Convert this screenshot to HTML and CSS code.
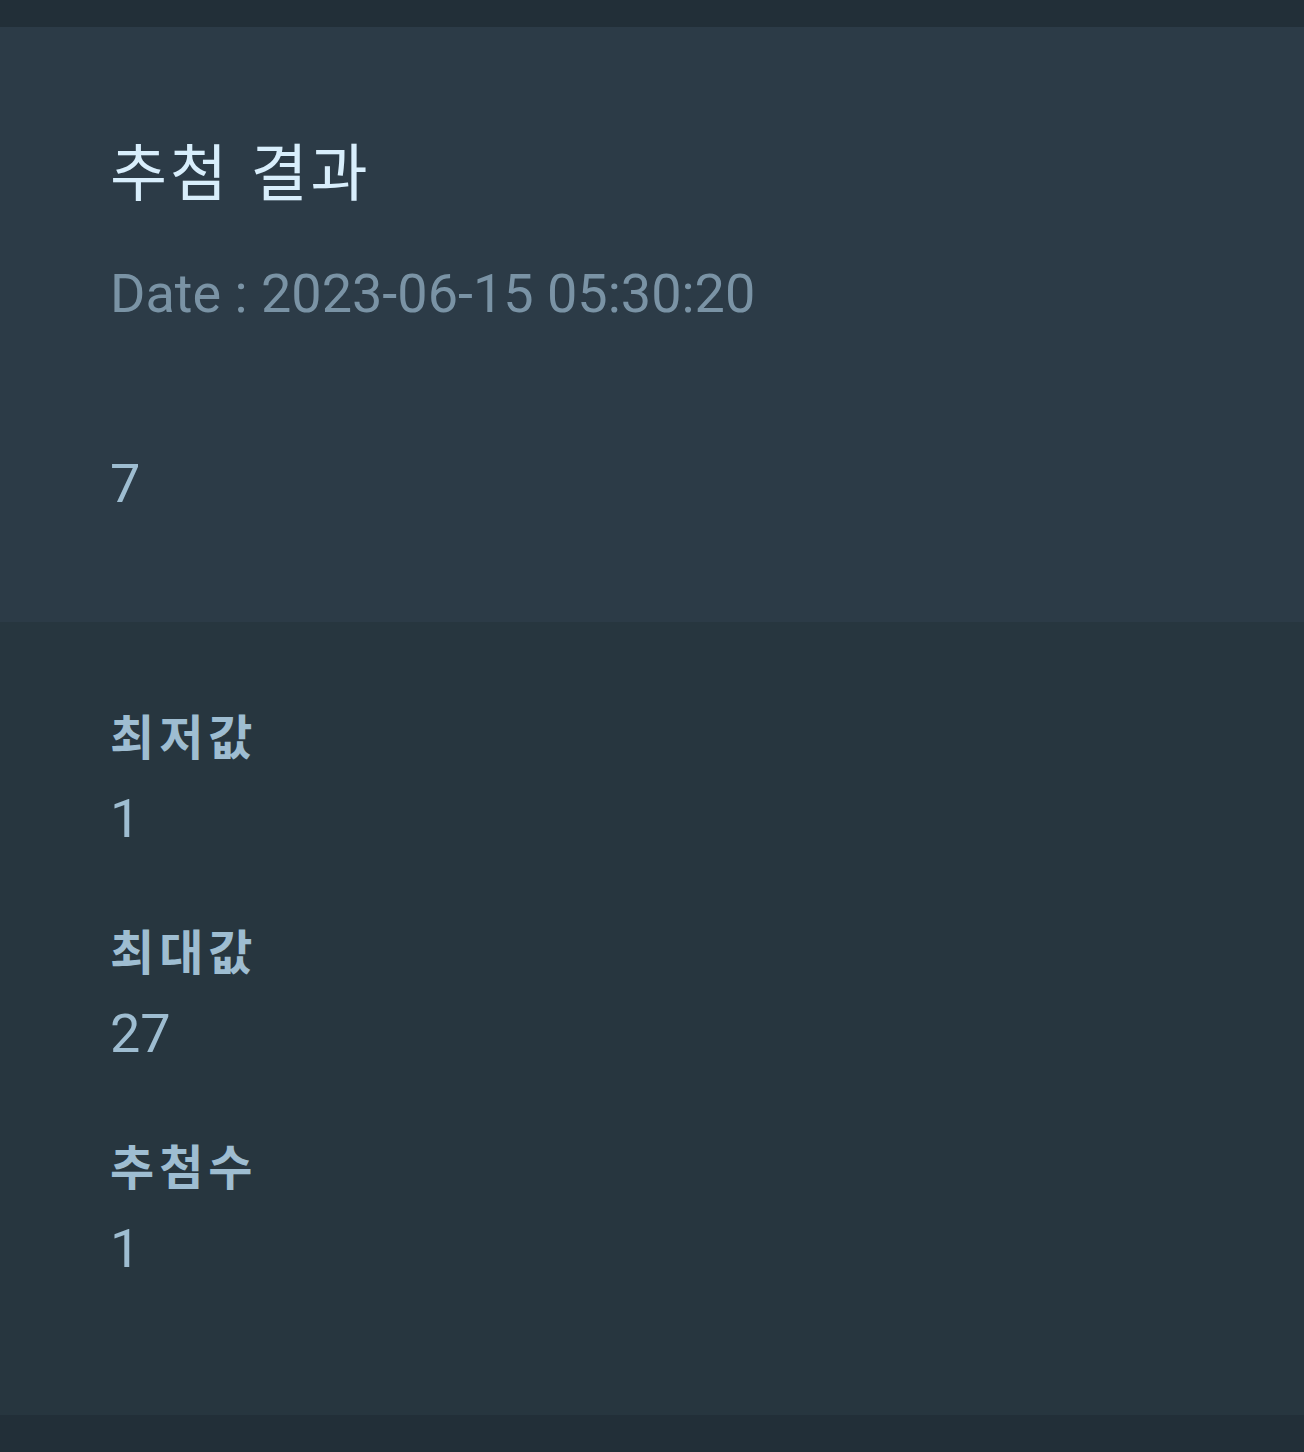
FILE: index.html
```html
<!DOCTYPE html>
<html lang="ko">
<head>
<meta charset="utf-8">
<link rel="stylesheet" href="styles.css">
</head>
<body>
<div class="topbar"></div>
<section class="header">
  <h1 class="title">추첨 결과</h1>
  <div class="date">Date : 2023-06-15 05:30:20</div>
  <div class="result">7</div>
</section>
<section class="stats">
  <div class="stat">
    <div class="label">최저값</div>
    <div class="value">1</div>
  </div>
  <div class="stat">
    <div class="label">최대값</div>
    <div class="value">27</div>
  </div>
  <div class="stat">
    <div class="label">추첨수</div>
    <div class="value">1</div>
  </div>
</section>
</body>
</html>
```
FILE: styles.css
```css
html, body {
  margin: 0;
  padding: 0;
}
body {
  background: #222f38;
  font-family: "Roboto", "Noto Sans CJK KR", sans-serif;
  width: 1304px;
  height: 1452px;
  overflow: hidden;
}
.topbar {
  height: 27px;
}
.header {
  background: #2c3b47;
  height: 595px;
  box-sizing: border-box;
  padding: 97px 0 0 110px;
  display: flex;
  flex-direction: column;
}
.title {
  margin: 0;
  font-family: "Noto Sans CJK KR", sans-serif;
  font-weight: 400;
  font-size: 62px;
  letter-spacing: 3px;
  line-height: 90px;
  color: #d8eefc;
}
.date {
  margin-top: 48px;
  font-size: 54px;
  line-height: 64px;
  color: #7a93a5;
}
.result {
  margin-top: 126px;
  font-size: 54px;
  line-height: 64px;
  color: #9ebdd1;
}
.stats {
  background: #27363f;
  height: 793px;
  box-sizing: border-box;
  padding: 59px 0 0 110px;
  display: flex;
  flex-direction: column;
  gap: 45px;
}
.label {
  font-family: "Noto Sans CJK KR", sans-serif;
  font-weight: 700;
  font-size: 48px;
  letter-spacing: 5px;
  line-height: 106px;
  color: #9ebdd1;
}
.value {
  font-size: 54px;
  line-height: 64px;
  color: #9ebdd1;
}
```
